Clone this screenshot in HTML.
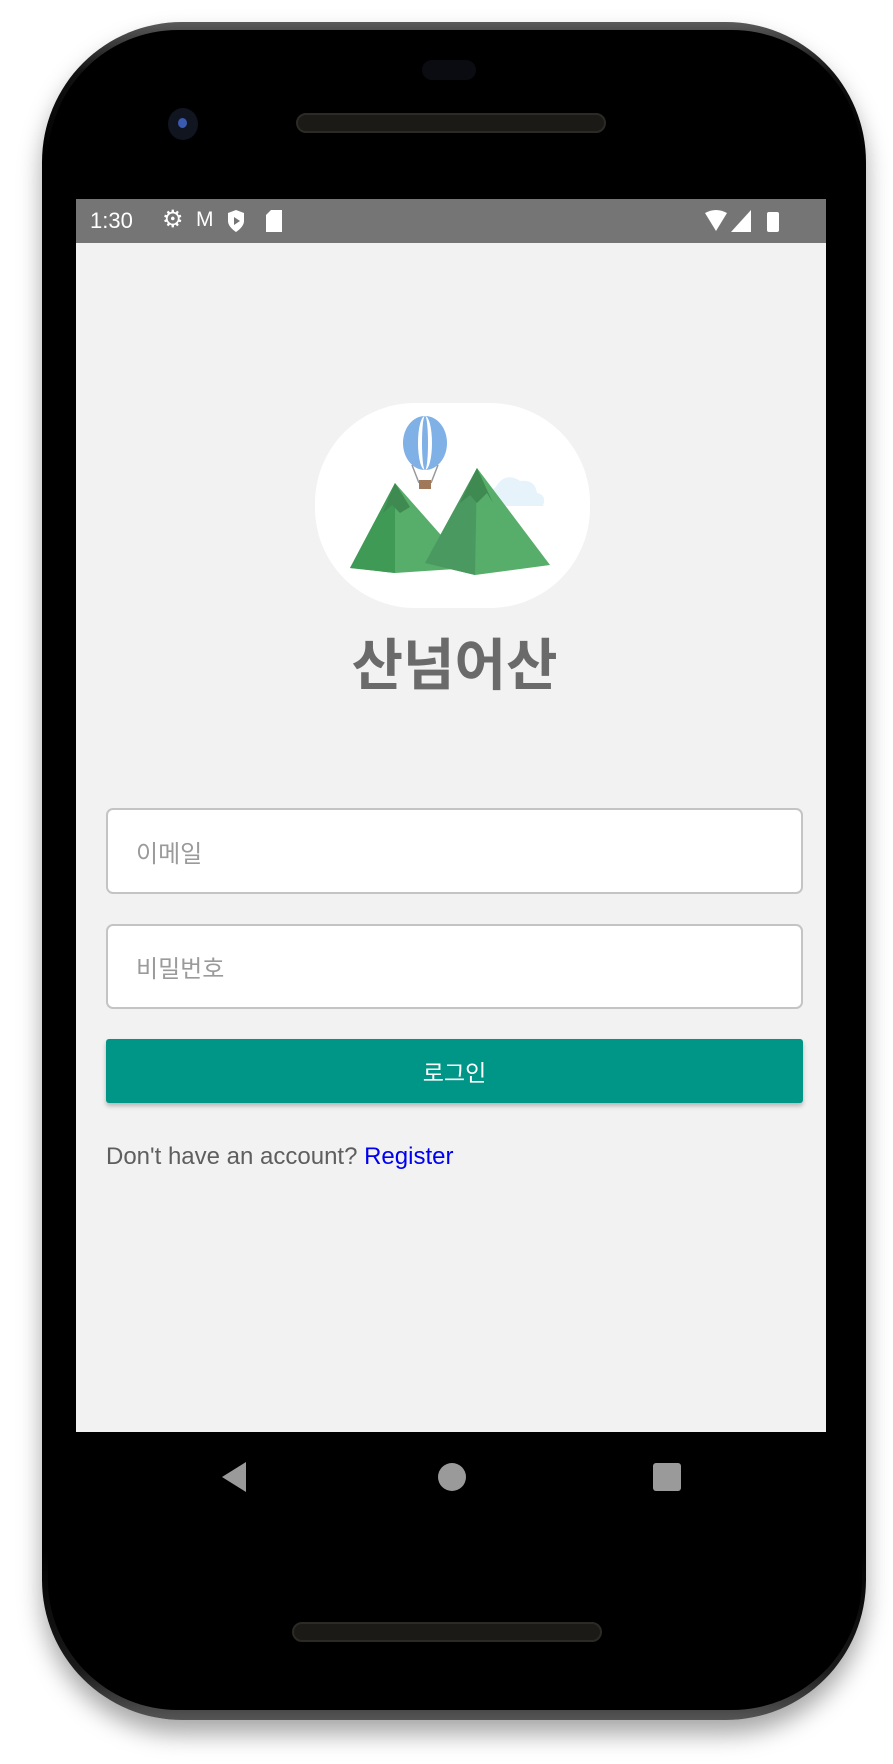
<!DOCTYPE html>
<html><head><meta charset="utf-8"><style>
*{margin:0;padding:0;box-sizing:border-box}
body{width:893px;height:1764px;background:#fff;position:relative;overflow:hidden;font-family:"Liberation Sans","Noto Sans CJK KR",sans-serif}
.phone{position:absolute;left:42px;top:22px;width:824px;height:1698px;border-radius:140px;background:linear-gradient(#5a5a5a,#111 3%,#000 8%,#000 90%,#1a1a1a 97%,#555);box-shadow:0 14px 24px rgba(0,0,0,.35)}
.inner{position:absolute;left:48px;top:30px;width:814px;height:1680px;border-radius:130px;background:#000}
.screen{position:absolute;left:76px;top:199px;width:750px;height:1233px;background:#f2f2f2}
.status{position:absolute;left:0;top:0;width:750px;height:44px;background:#757575;color:#fff;font-size:22px}
.abs{position:absolute}
.inp{position:absolute;left:30px;width:690px;background:#fff;border:2px solid #c4c4c4;border-radius:7px;color:#9a9a9a;font-size:24px;padding-left:28px;display:flex;align-items:center}
</style></head><body>
<div class="phone"></div>
<div class="inner"></div>
<div class="abs" style="left:422px;top:60px;width:54px;height:20px;border-radius:10px;background:#0a0c12"></div>
<div class="abs" style="left:168px;top:108px;width:30px;height:32px;border-radius:50%;background:#111520"><div class="abs" style="left:10px;top:10px;width:9px;height:10px;border-radius:50%;background:#3a5ab0"></div></div>
<div class="abs" style="left:296px;top:113px;width:310px;height:20px;border-radius:10px;background:#1b1a17;border:2px solid #2c2a25"></div>
<div class="abs" style="left:292px;top:1622px;width:310px;height:20px;border-radius:10px;background:#1b1a17;border:2px solid #2c2a25"></div>
<div class="screen">
 <div class="status">
  <span class="abs" style="left:14px;top:9px">1:30</span>
  <span class="abs" style="left:86px;top:6px;font-size:24px">⚙</span>
  <span class="abs" style="left:120px;top:9px;font-size:21px">M</span>
  <svg class="abs" style="left:150px;top:10px" width="20" height="24" viewBox="0 0 20 24"><path d="M10 1L18 4V12C18 18 10 23 10 23S2 18 2 12V4Z" fill="#fff"/><path d="M8 8L14 12L8 16Z" fill="#757575"/></svg>
  <svg class="abs" style="left:190px;top:11px" width="16" height="22"><path d="M5 0H16V22H0V5Z" fill="#fff"/></svg>
  <svg class="abs" style="left:629px;top:11px" width="82" height="24"><path d="M0 3Q11-3 22 3L11 21Z" fill="#fff"/><path d="M46 0V22H26Z" fill="#fff"/><rect x="62" y="2" width="12" height="20" rx="2" fill="#fff"/></svg>
 </div>
 <div class="abs" style="left:239px;top:204px;width:275px;height:205px;border-radius:100px/100px;background:#fff"></div>
 <svg class="abs" style="left:239px;top:204px" width="275" height="205" viewBox="0 0 275 205">
  <ellipse cx="110" cy="40" rx="22" ry="27" fill="#7fb0e6"/>
  <ellipse cx="110" cy="40" rx="7" ry="27" fill="#fff"/>
  <ellipse cx="110" cy="40" rx="3" ry="27" fill="#7fb0e6"/>
  <path d="M97 62L104 80M123 62L116 80" stroke="#999" stroke-width="1.5"/>
  <rect x="104" y="77" width="12" height="9" fill="#a0785a"/>
  <path d="M180 85Q190 68 205 78Q220 76 222 90Q232 92 228 103H172Q165 92 180 85Z" fill="#e6f3fa"/>
  <path d="M80 80L35 165L80 170L155 165Z" fill="#57ad6a"/>
  <path d="M80 80L35 165L80 170Z" fill="#3f9a55"/>
  <path d="M162 65L110 160L160 172L235 162Z" fill="#57ad6a"/>
  <path d="M162 65L110 160L160 172Z" fill="#4a9960"/>
  <path d="M162 65L145 100L155 92L162 100L172 90L178 100Z" fill="#3e8a50"/>
  <path d="M80 80L68 110L77 102L85 110L95 104Z" fill="#3e8a50"/>
 </svg>
 <div class="abs" style="left:0;width:757px;top:422px;text-align:center;font-size:56px;font-weight:bold;color:#6a6a6a;font-family:'Noto Sans CJK KR',sans-serif">산넘어산</div>
 <div class="inp" style="top:609px;height:86px;width:697px">이메일</div>
 <div class="inp" style="top:725px;height:85px;width:697px">비밀번호</div>
 <div class="abs" style="left:30px;top:840px;width:697px;height:64px;background:#009687;border-radius:3px;box-shadow:0 3px 5px rgba(0,0,0,.25);color:#fff;font-size:23px;display:flex;align-items:center;justify-content:center">로그인</div>
 <div class="abs" style="left:30px;top:944px;font-size:24px;color:#5e5e5e">Don't have an account? <span style="color:#0000f0">Register</span></div>
</div>
<div class="abs" style="left:826px;top:199px;width:7px;height:1233px;background:#000"></div>
<svg class="abs" style="left:220px;top:1461px" width="30" height="32"><path d="M26 1V31L2 16Z" fill="#9a9a9a"/></svg>
<div class="abs" style="left:438px;top:1463px;width:28px;height:28px;border-radius:50%;background:#9a9a9a"></div>
<div class="abs" style="left:653px;top:1463px;width:28px;height:28px;border-radius:3px;background:#9a9a9a"></div>
</body></html>
